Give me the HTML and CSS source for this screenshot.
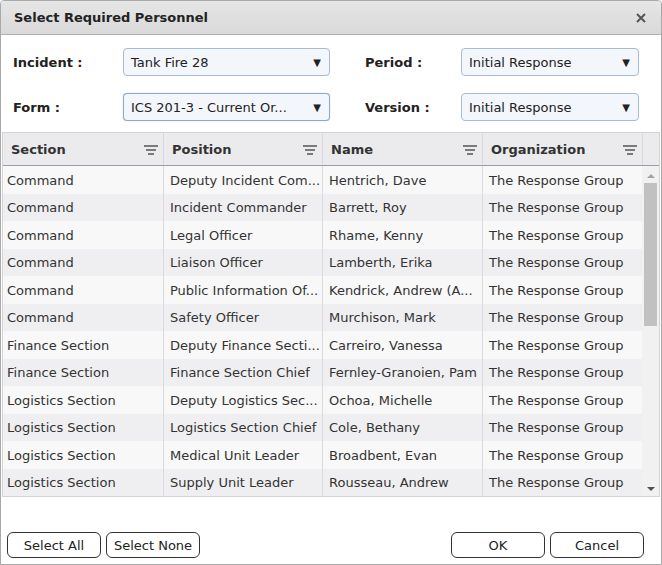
FILE: index.html
```html
<!DOCTYPE html>
<html lang="en">
<head>
  <meta charset="UTF-8" />
  <title>Select Required Personnel</title>
  <link rel="stylesheet" href="styles.css">
</head>
<body>

<div class="dialog">
  <div class="titlebar">
    <span class="title">Select Required Personnel</span>
    <svg class="close" viewBox="0 0 10 10"><path d="M1 1 L9 9 M9 1 L1 9"/></svg>
  </div>

  <div class="filters">
    <div class="field">
      <label>Incident :</label>
      <div class="select wide"><span>Tank Fire 28</span><i>&#9660;</i></div>
    </div>
    <div class="field">
      <label class="right-label">Period :</label>
      <div class="select"><span>Initial Response</span><i>&#9660;</i></div>
    </div>
    <div class="field">
      <label>Form :</label>
      <div class="select wide focus"><span>ICS 201-3 - Current Or...</span><i>&#9660;</i></div>
    </div>
    <div class="field">
      <label class="right-label">Version :</label>
      <div class="select"><span>Initial Response</span><i>&#9660;</i></div>
    </div>
  </div>

  <div class="grid">
    <div class="grid-head">
      <div class="hcell">Section <svg viewBox="0 0 14 10"><rect x="0" y="0" width="14" height="2"/><rect x="2" y="4" width="10" height="2"/><rect x="4" y="8" width="6" height="2"/></svg></div>
      <div class="hcell">Position <svg viewBox="0 0 14 10"><rect x="0" y="0" width="14" height="2"/><rect x="2" y="4" width="10" height="2"/><rect x="4" y="8" width="6" height="2"/></svg></div>
      <div class="hcell">Name <svg viewBox="0 0 14 10"><rect x="0" y="0" width="14" height="2"/><rect x="2" y="4" width="10" height="2"/><rect x="4" y="8" width="6" height="2"/></svg></div>
      <div class="hcell">Organization <svg viewBox="0 0 14 10"><rect x="0" y="0" width="14" height="2"/><rect x="2" y="4" width="10" height="2"/><rect x="4" y="8" width="6" height="2"/></svg></div>
      <div class="hcell spacer"></div>
    </div>
    <div class="grid-body">
      <div class="rows" id="rows"></div>
      <div class="scrollbar">
        <span class="arrow up"></span>
        <div class="thumb"></div>
        <span class="arrow down"></span>
      </div>
    </div>
  </div>

  <div class="footer">
    <div class="btn-group">
      <button>Select All</button>
      <button>Select None</button>
    </div>
    <div class="btn-group">
      <button>OK</button>
      <button>Cancel</button>
    </div>
  </div>
</div>

<script>
  const people = [
    ['Command', 'Deputy Incident Com...', 'Hentrich, Dave'],
    ['Command', 'Incident Commander', 'Barrett, Roy'],
    ['Command', 'Legal Officer', 'Rhame, Kenny'],
    ['Command', 'Liaison Officer', 'Lamberth, Erika'],
    ['Command', 'Public Information Of...', 'Kendrick, Andrew (A...'],
    ['Command', 'Safety Officer', 'Murchison, Mark'],
    ['Finance Section', 'Deputy Finance Secti...', 'Carreiro, Vanessa'],
    ['Finance Section', 'Finance Section Chief', 'Fernley-Granoien, Pam'],
    ['Logistics Section', 'Deputy Logistics Sec...', 'Ochoa, Michelle'],
    ['Logistics Section', 'Logistics Section Chief', 'Cole, Bethany'],
    ['Logistics Section', 'Medical Unit Leader', 'Broadbent, Evan'],
    ['Logistics Section', 'Supply Unit Leader', 'Rousseau, Andrew']
  ];

  const rows = document.getElementById('rows');
  people.forEach(p => {
    const row = document.createElement('div');
    row.className = 'row';
    [p[0], p[1], p[2], 'The Response Group'].forEach(text => {
      const cell = document.createElement('div');
      cell.className = 'cell';
      cell.textContent = text;
      row.appendChild(cell);
    });
    rows.appendChild(row);
  });
</script>

</body>
</html>
```

FILE: styles.css
```css
body {
  margin: 0;
  font-family: 'DejaVu Sans', Verdana, sans-serif;
  font-size: 13px;
  color: #222;
  background: #fff;
}

.dialog {
  width: 660px;
  height: 563px;
  border: 1px solid #a9a9a9;
  border-radius: 4px 4px 0 0;
  background: #fff;
  display: flex;
  flex-direction: column;
  overflow: hidden;
}

.titlebar {
  height: 33px;
  background: linear-gradient(#e6e6e6, #d9d9d9);
  border-bottom: 1px solid #b0b0b0;
  display: flex;
  align-items: center;
  justify-content: space-between;
  padding: 0 15px 0 13px;
}

.title {
  font-weight: bold;
  font-size: 13px;
  color: #222;
}

.close {
  width: 10px;
  height: 10px;
  stroke: #555;
  stroke-width: 2;
  fill: none;
}

.filters {
  display: grid;
  grid-template-columns: 328px 1fr;
  row-gap: 17px;
  padding: 13px 22px 11px 12px;
}

.field {
  display: flex;
  align-items: center;
}

.field label {
  font-weight: bold;
  width: 110px;
  color: #222;
}

.field .right-label {
  width: 96px;
  margin-left: 24px;
}

.select {
  flex: 1;
  height: 26px;
  border: 1px solid #a7bcd2;
  border-radius: 4px;
  background: #f3f6fb;
  display: flex;
  align-items: center;
  justify-content: space-between;
  padding: 0 8px 0 7px;
  color: #222;
}

.select.wide {
  flex: none;
  width: 190px;
}

.select.focus {
  border-color: #8fa9c4;
  box-shadow: 0 0 1px #8fa9c4;
}

.select i {
  font-style: normal;
  font-size: 10px;
  color: #222;
}

.grid {
  margin: 0 1px 0 1px;
  border: 1px solid #d4d4d8;
  display: flex;
  flex-direction: column;
}

.grid-head {
  display: grid;
  grid-template-columns: 161px 159px 160px 160px 1fr;
  height: 32px;
  background: #ebebee;
  border-bottom: 1px solid #9e9ea6;
}

.hcell {
  display: flex;
  align-items: center;
  justify-content: space-between;
  padding: 1px 5px 0 8px;
  font-weight: bold;
  color: #333;
  border-right: 1px solid #d8d8dc;
}

.hcell svg {
  width: 14px;
  height: 10px;
  fill: #7a7a7a;
}

.hcell.spacer {
  border-right: none;
}

.grid-body {
  display: flex;
  height: 330px;
}

.rows {
  flex: 1;
}

.row {
  display: grid;
  grid-template-columns: 161px 159px 160px 1fr;
  height: 27.5px;
}

.row:nth-child(odd) {
  background: #f8f8f8;
}

.row:nth-child(even) {
  background: #efeff1;
}

.cell {
  display: flex;
  align-items: center;
  padding: 1px 6px 0 6px;
  border-right: 1px solid #dadade;
  white-space: nowrap;
  overflow: hidden;
  color: #333;
}

.cell:first-child {
  padding-left: 4px;
}

.cell:last-child {
  border-right: none;
}

.scrollbar {
  width: 17px;
  background: #f1f1f1;
  display: flex;
  flex-direction: column;
  align-items: center;
}

.arrow {
  width: 0;
  height: 0;
  border-left: 4px solid transparent;
  border-right: 4px solid transparent;
}

.arrow.up {
  border-bottom: 4px solid #a3a3a3;
  margin: 8px 0 5px;
}

.arrow.down {
  border-top: 4px solid #505050;
  margin: auto 0 5px;
}

.thumb {
  width: 13px;
  height: 143px;
  background: #c1c1c1;
}

.footer {
  display: flex;
  justify-content: space-between;
  padding: 35px 17px 0 6px;
}

.btn-group {
  display: flex;
  gap: 5px;
}

button {
  font-family: 'DejaVu Sans', Verdana, sans-serif;
  font-size: 13px;
  color: #222;
  background: #fff;
  border: 1px solid #333;
  border-radius: 6px;
  height: 26px;
  width: 94px;
  padding: 0;
}
```
